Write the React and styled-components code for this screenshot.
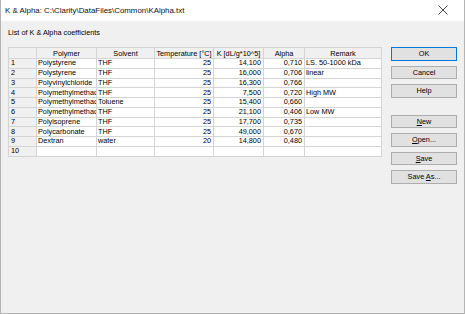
import React from "react";
import styled, { createGlobalStyle } from "styled-components";

const GlobalStyle = createGlobalStyle`
  html, body {
    margin: 0;
    padding: 0;
    background: #f0f0f0;
  }
  * {
    box-sizing: border-box;
  }
`;

const columns = [
  { key: "no", title: "", width: 28 },
  { key: "polymer", title: "Polymer", width: 60 },
  { key: "solvent", title: "Solvent", width: 58 },
  { key: "temp", title: "Temperature [°C]", width: 59, num: true },
  { key: "k", title: "K [dL/g*10^5]", width: 50, num: true },
  { key: "alpha", title: "Alpha", width: 41, num: true },
  { key: "remark", title: "Remark", width: 77 },
];

const rows = [
  ["Polystyrene", "THF", "25", "14,100", "0,710", "LS. 50-1000 kDa"],
  ["Polystyrene", "THF", "25", "16,000", "0,706", "linear"],
  ["Polyvinylchloride", "THF", "25", "16,300", "0,766", ""],
  ["Polymethylmethac", "THF", "25", "7,500", "0,720", "High MW"],
  ["Polymethylmethac", "Toluene", "25", "15,400", "0,660", ""],
  ["Polymethylmethac", "THF", "25", "21,100", "0,406", "Low MW"],
  ["Polyisoprene", "THF", "25", "17,700", "0,735", ""],
  ["Polycarbonate", "THF", "25", "49,000", "0,670", ""],
  ["Dextran", "water", "20", "14,800", "0,480", ""],
  ["", "", "", "", "", ""],
];

export default function App() {
  return (
    <>
      <GlobalStyle />
      <Window>
        <TitleBar>
          <Title>K &amp; Alpha: C:\Clarity\DataFiles\Common\KAlpha.txt</Title>
          <CloseButton>
            <svg width="10" height="10" viewBox="0 0 10 10">
              <path d="M0.5 0.5 L9.5 9.5 M9.5 0.5 L0.5 9.5" stroke="#333" strokeWidth="0.9" />
            </svg>
          </CloseButton>
        </TitleBar>
        <Body>
          <Label>List of K &amp; Alpha coefficients</Label>
          <Grid>
            <colgroup>
              {columns.map((c) => (
                <col key={c.key} style={{ width: c.width }} />
              ))}
            </colgroup>
            <thead>
              <tr>
                {columns.map((c) => (
                  <HeadCell key={c.key}>{c.title}</HeadCell>
                ))}
              </tr>
            </thead>
            <tbody>
              {rows.map((r, i) => (
                <tr key={i}>
                  <RowHead>{i + 1}</RowHead>
                  {r.map((v, j) => (
                    <Cell key={j} $num={columns[j + 1].num}>
                      {v}
                    </Cell>
                  ))}
                </tr>
              ))}
            </tbody>
          </Grid>
          <Buttons>
            <Button $default>
              <span>OK</span>
            </Button>
            <Button>
              <span>Cancel</span>
            </Button>
            <Button>
              <span>Help</span>
            </Button>
            <Spacer />
            <Button>
              <span>
                <u>N</u>ew
              </span>
            </Button>
            <Button>
              <span>
                <u>O</u>pen...
              </span>
            </Button>
            <Button>
              <span>
                <u>S</u>ave
              </span>
            </Button>
            <Button>
              <span>
                Save <u>A</u>s...
              </span>
            </Button>
          </Buttons>
        </Body>
      </Window>
    </>
  );
}

const Window = styled.div`
  width: 465px;
  height: 314px;
  background: #f0f0f0;
  border: 1px solid #b4b4b4;
  border-top: none;
  font-family: "Liberation Sans", Arial, sans-serif;
  font-size: 7.3px;
  color: #000;
  display: flex;
  flex-direction: column;
  overflow: hidden;
`;

const TitleBar = styled.div`
  height: 21px;
  background: #fff;
  display: flex;
  align-items: center;
  justify-content: space-between;
  padding: 0 0 1px 4px;
`;

const Title = styled.div`
  font-size: 7.9px;
  color: #111;
`;

const CloseButton = styled.div`
  width: 44px;
  height: 20px;
  display: flex;
  align-items: center;
  justify-content: center;
  margin-right: -1px;
`;

const Body = styled.div`
  display: grid;
  grid-template-columns: 373px 66px;
  grid-template-rows: 19px auto;
  column-gap: 10px;
  padding: 7px 0 0 7px;
`;

const Label = styled.div`
  grid-column: 1 / 3;
  line-height: 10px;
`;

const Grid = styled.table`
  border-collapse: collapse;
  table-layout: fixed;
  width: 373px;
  border: 1px solid #a0a0a0;
  background: #fff;
  align-self: start;
`;

const HeadCell = styled.th`
  height: 11px;
  padding: 0 1px;
  font-weight: normal;
  background: #f0f0f0;
  border: 1px solid #d4d4d4;
  text-align: center;
  white-space: nowrap;
  overflow: hidden;
  line-height: 9px;
`;

const RowHead = styled.td`
  height: 9.75px;
  padding: 0 2px;
  background: #f0f0f0;
  border: 1px solid #d4d4d4;
  line-height: 8px;
`;

const Cell = styled.td`
  height: 9.75px;
  padding: 0 2px 0 1px;
  border: 1px solid #d4d4d4;
  text-align: ${(p) => (p.$num ? "right" : "left")};
  white-space: nowrap;
  overflow: hidden;
  line-height: 8px;
`;

const Buttons = styled.div`
  display: flex;
  flex-direction: column;
  gap: 5px;
`;

const Spacer = styled.div`
  height: 7px;
`;

const Button = styled.div`
  height: 13.5px;
  background: #e1e1e1;
  border: 1px solid ${(p) => (p.$default ? "#0078d7" : "#adadad")};
  display: flex;
  align-items: center;
  justify-content: center;
  color: #000;
`;
